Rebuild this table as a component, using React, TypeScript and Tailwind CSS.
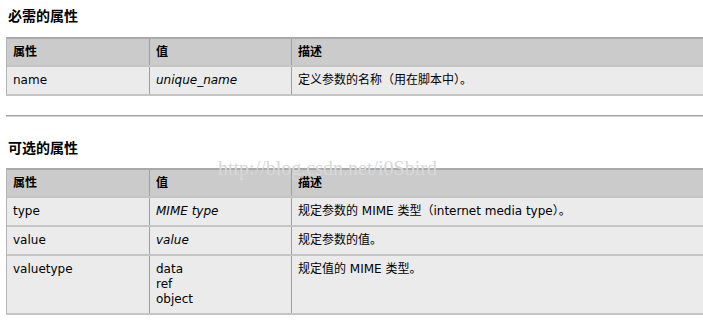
const font = {
  fontFamily: '"DejaVu Sans", Verdana, "Noto Sans CJK SC", sans-serif',
};

type Row = { name: string; value: string[]; italic?: boolean; desc: string; tall?: boolean };

const required: Row[] = [
  { name: "name", value: ["unique_name"], italic: true, desc: "定义参数的名称（用在脚本中）。" },
];

const optional: Row[] = [
  { name: "type", value: ["MIME type"], italic: true, desc: "规定参数的 MIME 类型（internet media type）。" },
  { name: "value", value: ["value"], italic: true, desc: "规定参数的值。" },
  { name: "valuetype", value: ["data", "ref", "object"], desc: "规定值的 MIME 类型。", tall: true },
];

function AttrTable({ rows }: { rows: Row[] }) {
  return (
    <div className="w-[720px] border-l border-[#b4b4b4] border-b-2 border-b-[#c4c4c4] text-[12px] text-black">
      <div className="flex h-[28px] border-t-2 border-[#a8a8a8] bg-[#cbcbcb] font-bold">
        <div className="flex w-[142px] items-center px-[6px]">属性</div>
        <div className="flex w-[142px] items-center border-l border-[#a0a0a0] px-[6px]">值</div>
        <div className="flex flex-1 items-center border-l border-[#a0a0a0] px-[6px]">描述</div>
      </div>
      {rows.map((r) => (
        <div
          key={r.name}
          className={
            r.tall
              ? "flex h-[59px] border-t-2 border-[#c4c4c4] bg-[#ebebeb] leading-[15px]"
              : "flex h-[29px] border-t-2 border-[#c4c4c4] bg-[#ebebeb] leading-[15px]"
          }
        >
          <div
            className={
              r.tall
                ? "flex w-[142px] flex-col justify-start px-[6px] pt-[6px]"
                : "flex w-[142px] flex-col justify-center px-[6px]"
            }
          >
            {r.name}
          </div>
          <div
            className={
              r.tall
                ? "flex w-[142px] flex-col justify-start border-l border-[#a0a0a0] px-[6px] pt-[6px]"
                : "flex w-[142px] flex-col justify-center border-l border-[#a0a0a0] px-[6px]"
            }
          >
            {r.value.map((v) => (
              <div key={v} className={r.italic ? "italic" : ""}>
                {v}
              </div>
            ))}
          </div>
          <div
            className={
              r.tall
                ? "flex flex-1 flex-col justify-start border-l border-[#a0a0a0] px-[6px] pt-[6px]"
                : "flex flex-1 flex-col justify-center border-l border-[#a0a0a0] px-[6px]"
            }
          >
            {r.desc}
          </div>
        </div>
      ))}
    </div>
  );
}

export default function App() {
  return (
    <div className="relative h-[321px] w-[703px] overflow-hidden bg-white pl-[6px]" style={font}>
      <h3 className="pl-[2px] pt-[6px] text-[14px] font-bold leading-[20px]">必需的属性</h3>
      <div className="mt-[11px]">
        <AttrTable rows={required} />
      </div>
      <div className="mt-[19px] h-[2px] w-[720px] border-t border-[#a6a6a6] bg-[#d0d0d0]" />
      <h3 className="mt-[21px] pl-[2px] text-[14px] font-bold leading-[20px]">可选的属性</h3>
      <div className="mt-[10px]">
        <AttrTable rows={optional} />
      </div>
      <div
        className="pointer-events-none absolute left-[218px] top-[158px] text-[20px] leading-[20px] text-[#d8d8d8]"
        style={{ fontFamily: '"Liberation Serif", serif' }}
      >
        http://blog.csdn.net/i0Sbird
      </div>
    </div>
  );
}
